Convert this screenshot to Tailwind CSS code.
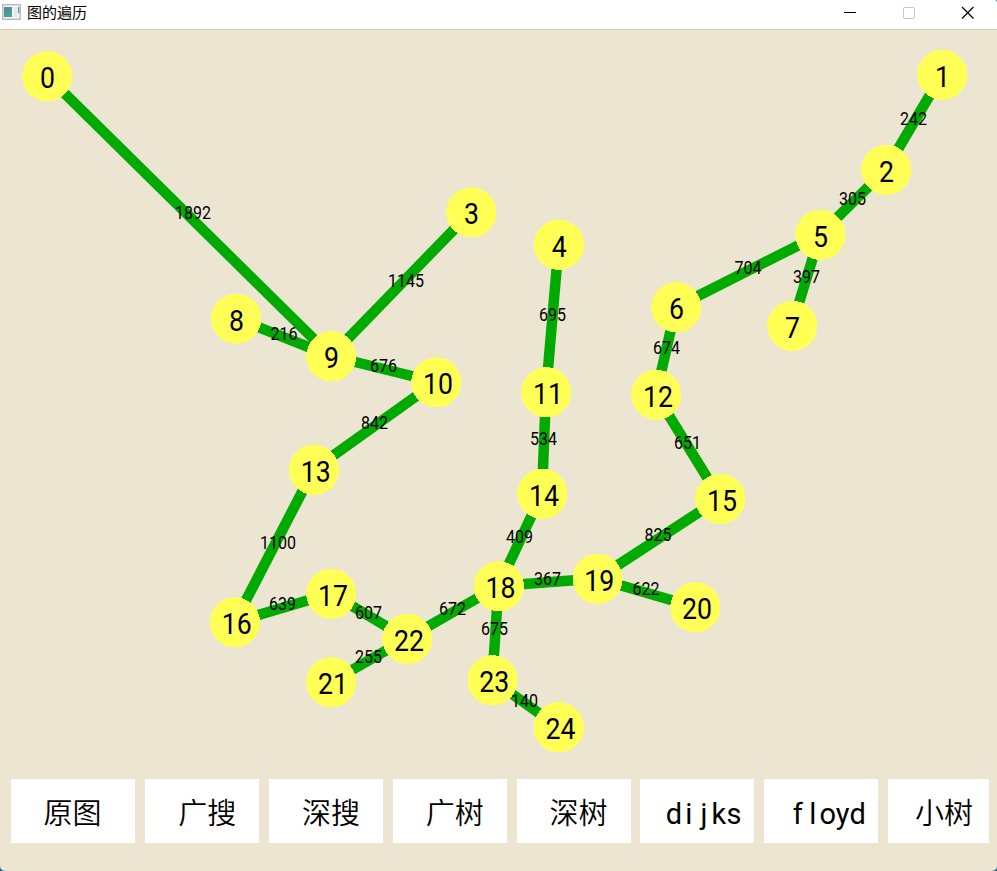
<!DOCTYPE html>
<html lang="zh-CN">
<head>
<meta charset="utf-8">
<title>图的遍历</title>
<script src="https://cdn.jsdelivr.net/npm/@tailwindcss/browser@4"></script>
</head>
<body class="bg-[#1c6a9c] overflow-hidden">
<div class="w-[997px] h-[871px] flex flex-col bg-[#ece5d2] rounded-b-[5px] rounded-tr-[3px] overflow-hidden">
  <header class="h-[30px] shrink-0 bg-white border-b border-[#d0cdb9] flex items-center justify-between">
    <div class="flex items-center gap-[6px] pl-[2px] -mt-[5px]">
      <svg width="19" height="16" viewBox="0 0 19 16">
        <defs><linearGradient id="g" x1="0" y1="0" x2="1" y2="1"><stop offset="0" stop-color="#4a84ae"/><stop offset="1" stop-color="#52a882"/></linearGradient></defs>
        <rect x=".75" y=".75" width="17.5" height="14.5" fill="#f4f5f7" stroke="#a9afb9" stroke-width="1.2"/>
        <rect x="2" y="3" width="8" height="10" fill="url(#g)"/>
        <rect x="11.500" y="3" width="4" height="10" fill="#e3e9e7"/>
        <rect x="16" y="3" width="1.300" height="6" fill="#4f9c9b"/>
      </svg>
      <h1 class="font-['Noto_Sans_CJK_SC',sans-serif] text-[15px] leading-[20px] text-black">图的遍历</h1>
    </div>
    <div class="flex items-center gap-[46px] pr-[23px] -mt-[4px]">
      <svg width="13" height="13" viewBox="0 0 13 13"><path d="M1 6.500h12" stroke="#000"/></svg>
      <svg width="13" height="13" viewBox="0 0 13 13"><rect x="1.500" y="1.500" width="11" height="11" rx="1" fill="none" stroke="#c6c6c6"/></svg>
      <svg width="13" height="13" viewBox="0 0 13 13"><path d="M1 1l11.500 11.500M12.500 1L1 12.500" stroke="#000" stroke-width="1.200"/></svg>
    </div>
  </header>
  <svg id="graph" class="block h-[749px] shrink-0 font-[Roboto,sans-serif]" width="997" height="749" viewBox="0 30 997 749"></svg>
  <nav class="flex pl-[11.400px] gap-[9.800px] h-[64px] shrink-0 text-[29px] leading-[64px] text-black whitespace-nowrap font-['Noto_Sans_CJK_SC',sans-serif] font-[350]">
    <button class="w-[124px] bg-white pl-[32px] text-left"><span class="block -mt-[1px]">原图</span></button>
    <button class="w-[114px] bg-white pl-[33px] text-left"><span class="block -mt-[1px]">广搜</span></button>
    <button class="w-[114px] bg-white pl-[33px] text-left"><span class="block -mt-[1px]">深搜</span></button>
    <button class="w-[114px] bg-white pl-[33px] text-left"><span class="block -mt-[1px]">广树</span></button>
    <button class="w-[114px] bg-white pl-[33px] text-left"><span class="block -mt-[1px]">深树</span></button>
    <button class="w-[114px] bg-white pl-[26px] flex font-[Roboto,sans-serif] font-normal pt-[3px]"><span class="w-[15px] flex justify-center">d</span><span class="w-[15px] flex justify-center">i</span><span class="w-[15px] flex justify-center">j</span><span class="w-[15px] flex justify-center">k</span><span class="w-[15px] flex justify-center">s</span></button>
    <button class="w-[114px] bg-white pl-[26px] flex font-[Roboto,sans-serif] font-normal pt-[3px]"><span class="w-[15px] flex justify-center">f</span><span class="w-[15px] flex justify-center">l</span><span class="w-[15px] flex justify-center">o</span><span class="w-[15px] flex justify-center">y</span><span class="w-[15px] flex justify-center">d</span></button>
    <button class="w-[101.500px] bg-white pl-[27px] text-left"><span class="block -mt-[1px]">小树</span></button>
  </nav>
</div>
<script>
// Node centres, indexed by node number
const nodes = [[47,76],[942,74.5],[886,169.5],[471,212],[558.7,244.5],[820,234.5],[676,307],[792,325.5],[236,318.3],[331,356],[436,382],[546,392],[656,394.5],[313.7,469.5],[542,493.5],[720,498.5],[234.7,622],[331,593.5],[498.5,586],[597.3,578.5],[695,607],[331,682],[407,638.5],[492.3,680],[558.5,727]];
// from, to, weight, label left, label baseline
const edges = [[0,9,1892,175,219],[1,2,242,900,125.7],[2,5,305,839,205.5],[5,6,704,734.5,274.3],[5,7,397,793,283],[3,9,1145,388,287],[8,9,216,270.5,340.5],[9,10,676,370,372],[4,11,695,539,321.5],[11,14,534,530,445.5],[6,12,674,653,354],[12,15,651,674,449],[10,13,842,361,429.3],[13,16,1100,260,549.5],[16,17,639,269,610.5],[17,22,607,355,619],[21,22,255,355,663],[22,18,672,439,615.5],[14,18,409,506,543],[18,19,367,534,585.7],[15,19,825,644.5,541.5],[19,20,622,632.5,595.5],[18,23,675,481,635.5],[23,24,140,511,707]];
let out = '';
for (const [a, b] of edges) out += `<line x1="${nodes[a][0]}" y1="${nodes[a][1]}" x2="${nodes[b][0]}" y2="${nodes[b][1]}" stroke="#00aa00" stroke-width="10.5"/>`;
for (const [x, y] of nodes) out += `<circle cx="${x + 0.3}" cy="${y + 0.3}" r="25.1" fill="#ffff55" shape-rendering="crispEdges"/>`;
for (const [, , w, x, y] of edges) out += `<text x="${x}" y="${y - 0.4}" font-size="17.8" textLength="${String(w).length * 9}" lengthAdjust="spacingAndGlyphs">${w}</text>`;
nodes.forEach(([x, y], i) => {
  const n = String(i).length;
  out += `<text x="${x + (n === 2 ? -13 : -7)}" y="${y + 12.3}" font-size="29.5" textLength="${n * 15}" lengthAdjust="spacingAndGlyphs">${i}</text>`;
});
document.getElementById('graph').innerHTML = out;
</script>
</body>
</html>
